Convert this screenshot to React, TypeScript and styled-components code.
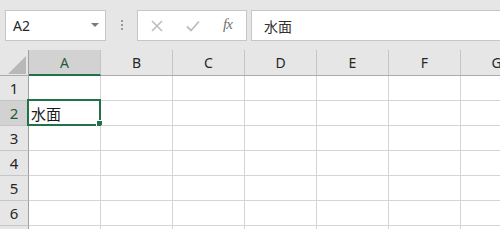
import React from "react";
import styled, { createGlobalStyle } from "styled-components";

const GlobalStyle = createGlobalStyle`
  html, body { margin: 0; padding: 0; background: #ffffff; overflow: hidden; }
  body { font-family: "Noto Sans", "Noto Sans CJK JP", sans-serif; }
  * { box-sizing: border-box; }
`;

const Page = styled.div`
  width: 500px;
  height: 229px;
  overflow: hidden;
  background: #ffffff;
`;

const FormulaBar = styled.div`
  height: 50px;
  background: #e6e6e6;
  display: flex;
  align-items: flex-start;
  padding: 10px 0 0 5px;
`;

const NameBox = styled.div`
  width: 101px;
  height: 31px;
  background: #ffffff;
  border: 1px solid #c6c6c6;
  display: flex;
  align-items: center;
  justify-content: space-between;
  padding: 0 6px 0 7px;
  font-family: "Noto Sans", sans-serif;
  font-size: 14px;
  color: #262626;
`;

const DropArrow = styled.span`
  width: 0;
  height: 0;
  border-left: 4px solid transparent;
  border-right: 4px solid transparent;
  border-top: 4px solid #7a7a7a;
  margin-top: -2px;
`;

const Grip = styled.div`
  width: 31px;
  height: 31px;
  display: flex;
  flex-direction: column;
  align-items: center;
  justify-content: center;
  gap: 2px;
  padding-bottom: 2px;
`;

const GripDot = styled.span`
  width: 2px;
  height: 2px;
  background: #9a9a9a;
`;

const ButtonGroup = styled.div`
  width: 110px;
  height: 31px;
  background: #ffffff;
  border: 1px solid #c6c6c6;
  display: flex;
  align-items: center;
  padding-left: 12px;
  gap: 22px;
`;

const IconSlot = styled.span`
  display: flex;
  align-items: center;
  justify-content: center;
  width: 14px;
  height: 14px;
`;

const Fx = styled.span`
  font-family: "Liberation Serif", serif;
  font-style: italic;
  font-size: 15px;
  color: #707070;
  margin-left: 1px;
  margin-top: -3px;
  letter-spacing: -1px;
`;

const FormulaInput = styled.div`
  flex: 1;
  margin-left: 4px;
  margin-right: -4px;
  height: 31px;
  background: #ffffff;
  border: 1px solid #c6c6c6;
  display: flex;
  align-items: center;
  padding-left: 12px;
  font-family: "Noto Sans CJK JP", sans-serif;
  font-size: 14px;
  color: #303030;
`;

const Sheet = styled.div`
  display: grid;
  grid-template-columns: 29px repeat(7, 72px);
  grid-template-rows: 26px repeat(7, 25px);
`;

const Corner = styled.div`
  background: #e6e6e6;
  border-right: 1px solid #9f9f9f;
  border-bottom: 1px solid #ababab;
  position: relative;
`;

const CornerTriangle = styled.svg`
  position: absolute;
  right: 2px;
  bottom: 1px;
`;

const ColHeader = styled.div<{ $active?: boolean }>`
  background: ${(p) => (p.$active ? "#d2d2d2" : "#e6e6e6")};
  border-right: 1px solid #c4c4c4;
  border-bottom: ${(p) => (p.$active ? "2px solid #217346" : "1px solid #ababab")};
  display: flex;
  align-items: center;
  justify-content: center;
  padding-top: ${(p) => (p.$active ? "1px" : "0")};
  font-family: "Noto Sans", sans-serif;
  font-size: 14px;
  color: ${(p) => (p.$active ? "#1e5c3a" : "#262626")};
`;

const RowHeader = styled.div<{ $active?: boolean }>`
  background: ${(p) => (p.$active ? "#d2d2d2" : "#e6e6e6")};
  border-right: 1px solid #9f9f9f;
  border-bottom: 1px solid #c6c6c6;
  display: flex;
  align-items: center;
  justify-content: center;
  font-family: "Noto Sans", sans-serif;
  font-size: 15px;
  color: ${(p) => (p.$active ? "#1e5c3a" : "#262626")};
`;

const Cell = styled.div<{ $selected?: boolean }>`
  position: relative;
  border-right: 1px solid #d4d4d4;
  border-bottom: 1px solid #d4d4d4;
  display: flex;
  align-items: center;
  padding-left: 2px;
  font-family: "Noto Sans CJK JP", sans-serif;
  font-size: 15px;
  color: #1a1a1a;
  white-space: nowrap;
`;

const Selection = styled.div`
  position: absolute;
  left: -2px;
  top: -2px;
  right: -1px;
  bottom: -1px;
  border: 2px solid #217346;
  pointer-events: none;
`;

const FillHandle = styled.div`
  position: absolute;
  right: -4px;
  bottom: -3px;
  width: 7px;
  height: 7px;
  background: #217346;
  border: 1px solid #ffffff;
`;

const columns = ["A", "B", "C", "D", "E", "F", "G"];
const rows = [1, 2, 3, 4, 5, 6, 7];

export default function App() {
  return (
    <Page>
      <GlobalStyle />
      <FormulaBar>
        <NameBox>
          <span>A2</span>
          <DropArrow />
        </NameBox>
        <Grip>
          <GripDot />
          <GripDot />
          <GripDot />
        </Grip>
        <ButtonGroup>
          <IconSlot>
            <svg width="12" height="12" viewBox="0 0 12 12">
              <path d="M1 1 L11 11 M11 1 L1 11" stroke="#bdbdbd" strokeWidth="1.6" fill="none" />
            </svg>
          </IconSlot>
          <IconSlot>
            <svg width="14" height="12" viewBox="0 0 14 12">
              <path d="M1 6.5 L5 10.5 L13 1.5" stroke="#bdbdbd" strokeWidth="1.8" fill="none" />
            </svg>
          </IconSlot>
          <Fx>fx</Fx>
        </ButtonGroup>
        <FormulaInput>水面</FormulaInput>
      </FormulaBar>
      <Sheet>
        <Corner>
          <CornerTriangle width="18" height="18" viewBox="0 0 18 18">
            <polygon points="18,0 18,18 0,18" fill="#b8b8b8" />
          </CornerTriangle>
        </Corner>
        {columns.map((c, i) => (
          <ColHeader key={c} $active={i === 0}>
            {c}
          </ColHeader>
        ))}
        {rows.map((r) => (
          <React.Fragment key={r}>
            <RowHeader $active={r === 2}>{r}</RowHeader>
            {columns.map((c, i) => {
              const selected = r === 2 && i === 0;
              return (
                <Cell key={c + r} $selected={selected}>
                  {selected && "水面"}
                  {selected && (
                    <Selection>
                      <FillHandle />
                    </Selection>
                  )}
                </Cell>
              );
            })}
          </React.Fragment>
        ))}
      </Sheet>
    </Page>
  );
}
